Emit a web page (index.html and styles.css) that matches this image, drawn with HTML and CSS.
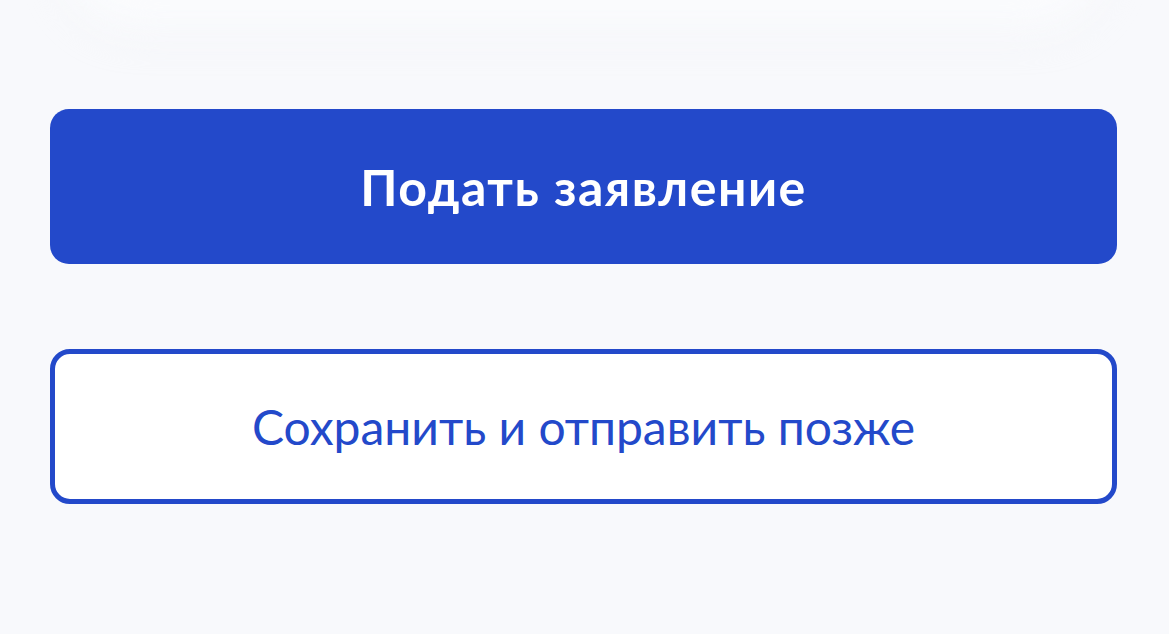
FILE: index.html
```html
<!DOCTYPE html>
<html lang="ru">
<head>
<meta charset="utf-8">
<link rel="stylesheet" href="styles.css">
</head>
<body>
<div class="page">
  <div class="card-edge"></div>
  <div class="actions">
    <button class="btn btn-primary">Подать заявление</button>
    <button class="btn btn-secondary">Сохранить и отправить позже</button>
  </div>
</div>
</body>
</html>
```
FILE: styles.css
```css
html, body {
  margin: 0;
  padding: 0;
  background: #f8f9fc;
  overflow: hidden;
}
.page {
  width: 1169px;
  height: 634px;
  position: relative;
  overflow: hidden;
}
.card-edge {
  height: 80px;
  margin: -50px 60px 0 60px;
  background: #fafbfd;
  border-radius: 0 0 120px 120px;
  filter: blur(18px);
  box-shadow: 0 10px 60px rgba(40, 60, 120, 0.02);
}
.actions {
  display: flex;
  flex-direction: column;
  gap: 85px;
  padding: 79px 52px 0 50px;
}
.btn {
  font-family: Lato, "Open Sans", sans-serif;
  font-size: 50px;
  height: 155px;
  border-radius: 19px;
  cursor: pointer;
  display: flex;
  align-items: center;
  justify-content: center;
  box-sizing: border-box;
  width: 100%;
}
.btn-primary {
  background: #2349ca;
  color: #ffffff;
  border: none;
  font-weight: 700;
  letter-spacing: 1.5px;
}
.btn-secondary {
  background: #ffffff;
  color: #2349ca;
  border: 5px solid #2349ca;
  font-weight: 400;
  font-size: 48px;
  border-radius: 20px;
}
```
